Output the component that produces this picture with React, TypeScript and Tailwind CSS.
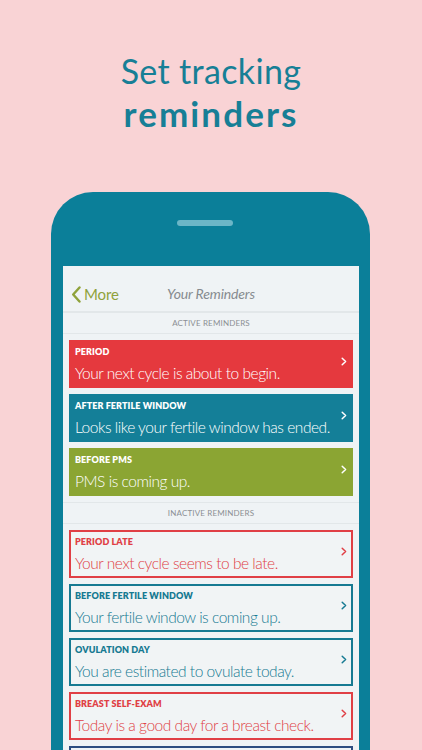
import React from "react";

type Item = { label: string; text: string; color: string; solid: boolean };

const active: Item[] = [
  { label: "PERIOD", text: "Your next cycle is about to begin.", color: "#e5393e", solid: true },
  { label: "AFTER FERTILE WINDOW", text: "Looks like your fertile window has ended.", color: "#147f98", solid: true },
  { label: "BEFORE PMS", text: "PMS is coming up.", color: "#8ba533", solid: true },
];

const inactive: Item[] = [
  { label: "PERIOD LATE", text: "Your next cycle seems to be late.", color: "#e03f45", solid: false },
  { label: "BEFORE FERTILE WINDOW", text: "Your fertile window is coming up.", color: "#167a92", solid: false },
  { label: "OVULATION DAY", text: "You are estimated to ovulate today.", color: "#167a92", solid: false },
  { label: "BREAST SELF-EXAM", text: "Today is a good day for a breast check.", color: "#e03f45", solid: false },
];

function Chevron({ color }: { color: string }) {
  return (
    <svg width="6" height="9" viewBox="0 0 6 9" className="shrink-0">
      <polyline points="1.2,1.2 4.6,4.5 1.2,7.8" fill="none" stroke={color} strokeWidth="1.5" strokeLinecap="round" strokeLinejoin="round" />
    </svg>
  );
}

function Card({ item }: { item: Item }) {
  const fg = item.solid ? "#ffffff" : item.color;
  return (
    <div
      className="h-[48px] flex items-center pl-[6px] pr-[6px] box-border"
      style={
        item.solid
          ? { backgroundColor: item.color }
          : { border: `2px solid ${item.color}`, backgroundColor: "#f1f4f5", paddingLeft: 4, paddingRight: 4 }
      }
    >
      <div className="flex-1 flex flex-col" style={{ color: fg }}>
        <div className="text-[9px] font-extrabold leading-[10px] tracking-[0.01em] mt-[1px]">{item.label}</div>
        <div className="text-[15.5px] font-light leading-[18px] mt-[7px] tracking-[-0.03em]">{item.text}</div>
      </div>
      <div className="mb-[6px]">
        <Chevron color={fg} />
      </div>
    </div>
  );
}

function SectionHeader({ title }: { title: string }) {
  return (
    <div className="h-[22px] flex items-center justify-center border-y border-[#e2e7e9] text-[8px] text-[#8b8f93] tracking-[0.02em] bg-[#eff3f5]">
      {title}
    </div>
  );
}

export default function App() {
  return (
    <div
      className="w-[422px] h-[750px] overflow-hidden bg-[#f9d3d5] flex flex-col"
      style={{ fontFamily: "Lato, 'Noto Sans', sans-serif" }}
    >
      <div className="pt-[51px] flex flex-col items-center text-[#177f96]">
        <div className="text-[34px] leading-[40px] tracking-[0.01em]">Set tracking</div>
        <div className="text-[35px] leading-[40px] font-bold tracking-[0.06em] mt-[2px]">reminders</div>
      </div>
      <div className="ml-[51px] mt-[59px] w-[319px] flex-1 bg-[#0b7f99] rounded-t-[42px] pt-[28px] pl-[12px] pr-[11px] flex flex-col">
        <div className="self-center w-[56px] h-[6px] rounded-full bg-[#6cb6c7] ml-[-12px]" />
        <div className="mt-[40px] flex-1 bg-[#eff3f5] flex flex-col">
          <div className="h-[46px] flex items-end pb-[8px] relative border-b border-[#e2e7e9]">
            <div className="flex items-center pl-[8px] text-[#8fa23b]">
              <svg width="11" height="17" viewBox="0 0 11 17">
                <polyline points="8.5,1.5 2.2,8.5 8.5,15.5" fill="none" stroke="#8fa23b" strokeWidth="2.4" strokeLinecap="round" strokeLinejoin="round" />
              </svg>
              <span className="text-[15px] ml-[2px] leading-[18px] tracking-[-0.01em]">More</span>
            </div>
            <div className="absolute left-0 right-0 bottom-[8px] text-center text-[14px] italic text-[#868b8f] leading-[18px] tracking-[-0.01em]">
              Your Reminders
            </div>
          </div>
          <SectionHeader title="ACTIVE REMINDERS" />
          <div className="flex flex-col gap-[6px] px-[6px] py-[6px]">
            {active.map((it) => (
              <Card key={it.label} item={it} />
            ))}
          </div>
          <SectionHeader title="INACTIVE REMINDERS" />
          <div className="flex flex-col gap-[6px] px-[6px] py-[6px]">
            {inactive.map((it) => (
              <Card key={it.label} item={it} />
            ))}
            <div className="h-[48px] border-2 border-[#2c4d80]" />
          </div>
        </div>
      </div>
    </div>
  );
}
